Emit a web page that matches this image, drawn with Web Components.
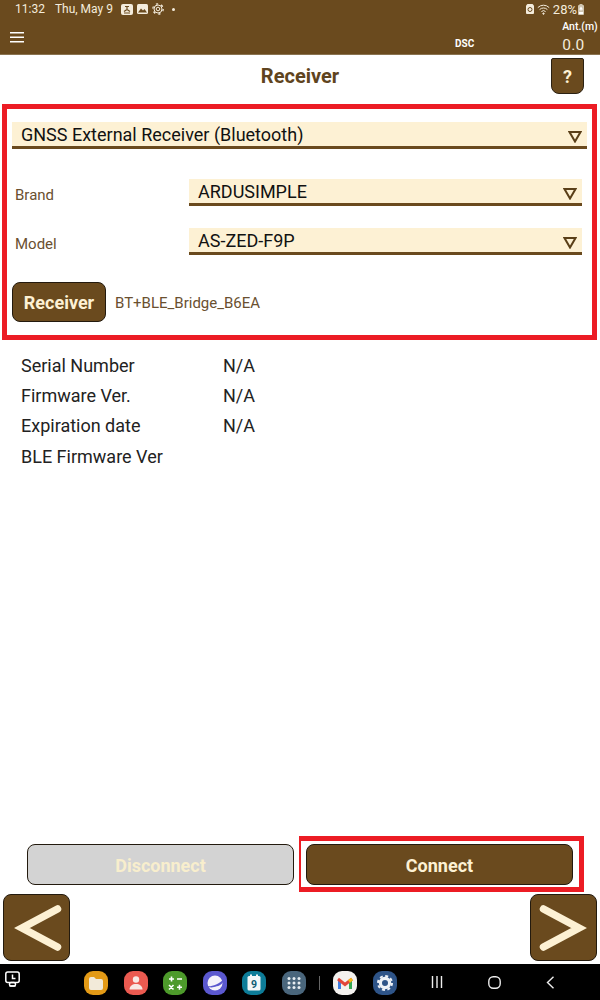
<!DOCTYPE html>
<html>
<head>
<meta charset="utf-8">
<title>Receiver</title>
<style>
  html, body { margin: 0; height: 100%; background: #fff; }
  body { font-family: Roboto, "Liberation Sans", sans-serif; }
  #app { display: flex; flex-direction: column; height: 1000px; width: 600px; overflow: hidden; }
</style>
</head>
<body>
<div id="app">
  <app-header></app-header>
  <title-bar>Receiver</title-bar>
  <annot-box>
    <drop-down wide>GNSS External Receiver (Bluetooth)</drop-down>
    <labeled-row label="Brand" style="margin-top:30px">ARDUSIMPLE</labeled-row>
    <labeled-row label="Model" style="margin-top:22px">AS-ZED-F9P</labeled-row>
    <device-row name="BT+BLE_Bridge_B6EA"></device-row>
  </annot-box>
  <info-list>
    <info-row label="Serial Number" value="N/A"></info-row>
    <info-row label="Firmware Ver." value="N/A"></info-row>
    <info-row label="Expiration date" value="N/A"></info-row>
    <info-row label="BLE Firmware Ver"></info-row>
  </info-list>
  <action-bar></action-bar>
  <nav-bar></nav-bar>
  <system-nav></system-nav>
</div>

<script>
const BROWN = '#6a4a1e';
const CREAM = '#fdf1d4';

class AppHeader extends HTMLElement {
    constructor() {
        super();
        this.attachShadow({ mode: 'open' }).innerHTML = `
            <style>
                :host { display: block; height: 55px; background: ${BROWN}; color: #f4ecdc; flex: none; border-bottom: 1px solid #8a7350; box-sizing: border-box; }
                .status { display: flex; align-items: center; height: 18px; padding: 0 16px 0 15px; font-size: 12px; }
                .date { margin-left: 10px; }
                .icons { display: flex; align-items: center; margin-left: 8px; gap: 4px; }
                .right { margin-left: auto; display: flex; align-items: center; }
                .dot { width: 3px; height: 3px; background: #f4ecdc; border-radius: 50%; margin-left: 8px; }
                .bar { display: flex; align-items: flex-start; height: 36px; padding-left: 10px; }
                .menu { margin-top: 14px; }
                .dsc { margin-left: 431px; margin-top: 20px; font-size: 10px; font-weight: 700; color: #fff; }
                .ant { margin-left: 88px; display: flex; flex-direction: column; }
                .ant b { font-size: 10.5px; font-weight: 500; color: #fff; margin-top: 2px; white-space: nowrap; }
                .ant span { font-size: 15.5px; margin-top: 3px; letter-spacing: .3px; }
            </style>
            <div class="status">
                <span>11:32</span><span class="date">Thu, May 9</span>
                <span class="icons">
                    <svg width="12" height="11" viewBox="0 0 12 11"><rect width="12" height="11" rx="2" fill="#f4ecdc"/><path d="M4 2.5h4M6 2.5v3M3 7.5l3-2 3 2M3 9h6" stroke="${BROWN}" fill="none" stroke-width="1.2"/></svg>
                    <svg width="11" height="10" viewBox="0 0 11 10"><rect width="11" height="10" rx="1.5" fill="#f4ecdc"/><path d="M1 8.5l3-4 2 2 1.5-1.5 2.5 3.500z" fill="${BROWN}"/></svg>
                    <svg width="12" height="12" viewBox="0 0 12 12" fill="none" stroke="#f4ecdc"><circle cx="6" cy="6" r="1.800"/><circle cx="6" cy="6" r="4" stroke-width="1"/><circle cx="6" cy="6" r="5.200" stroke-width="1.300" stroke-dasharray="2.200 3.250"/></svg>
                </span>
                <i class="dot"></i>
                <span class="right">
                    <svg width="8" height="10" viewBox="0 0 8 10"><path d="M1.5 0h5L8 1.5V9a1 1 0 0 1-1 1H1a1 1 0 0 1-1-1V1.5z" fill="#f4ecdc"/><circle cx="4" cy="5.500" r="2" fill="none" stroke="${BROWN}"/></svg>
                    <svg style="margin-left:3px" width="13" height="11" viewBox="0 0 13 11" fill="none" stroke="#f4ecdc" stroke-width="1"><path d="M.8 3.600a8 8 0 0 1 11.400 0M2.600 5.600a5.500 5.500 0 0 1 7.800 0M4.400 7.600a3 3 0 0 1 4.200 0"/><circle cx="6.500" cy="9.600" r=".7" fill="#f4ecdc"/></svg>
                    <span style="margin-left:3px;font-size:13px">28%</span>
                    <svg style="margin-left:1px" width="6" height="11" viewBox="0 0 6 11"><rect x="1.500" width="3" height="1.500" fill="#cfc5b0"/><rect y="1" width="6" height="10" rx="1" fill="#cfc5b0"/><path d="M3 2.500L5 5.500H3.500v1h-1v-1H1zM1 8h4v2H1z" fill="#fff"/></svg>
                </span>
            </div>
            <div class="bar">
                <svg class="menu" width="14" height="11" viewBox="0 0 14 11" fill="#fff"><rect width="14" height="1.500"/><rect y="4.500" width="14" height="1.500"/><rect y="9" width="14" height="1.500"/></svg>
                <span class="dsc">DSC</span>
                <span class="ant"><b>Ant.(m)</b><span>0.0</span></span>
            </div>`;
    }
}

class TitleBar extends HTMLElement {
    constructor() {
        super();
        this.attachShadow({ mode: 'open' }).innerHTML = `
            <style>
                :host { display: grid; grid-template-columns: 1fr auto 1fr; height: 49px; flex: none; }
                h1 { grid-column: 2; margin: 10px 0 0; font-size: 20px; line-height: 23px; font-weight: 700; color: #5f4420; }
                .help { grid-column: 3; justify-self: end; margin: 3px 16px 0 0; width: 33px; height: 36px; box-sizing: border-box;
                    background: ${BROWN}; border: 1.5px solid #2b2113; border-radius: 2px 2px 8px 8px;
                    color: ${CREAM}; font-weight: 700; font-size: 18px; display: grid; place-items: center; }
            </style>
            <h1><slot></slot></h1>
            <div class="help">?</div>`;
    }
}

class AnnotBox extends HTMLElement {
    constructor() {
        super();
        this.attachShadow({ mode: 'open' }).innerHTML = `
            <style>
                :host { display: block; flex: none; box-sizing: border-box; width: 595px; height: 236px; margin-left: 2px;
                    border: 5px solid #ec1c24; padding: 13px 5px 0; }
            </style>
            <slot></slot>`;
    }
}

class DropDown extends HTMLElement {
    constructor() {
        super();
        this.attachShadow({ mode: 'open' }).innerHTML = `
            <style>
                :host { display: flex; align-items: center; height: 27px; box-sizing: border-box; background: ${CREAM};
                    border-bottom: 3px solid ${BROWN}; padding-left: 9px; color: #111; font-size: 18px; }
                svg { margin-left: auto; margin-right: 5px; margin-top: 5px; }
            </style>
            <slot></slot>
            <svg width="14" height="12" viewBox="0 0 14 12"><path d="M1.500 1h11L7 10.500z" fill="none" stroke="#5a3f18" stroke-width="2"/></svg>`;
    }
}

class LabeledRow extends HTMLElement {
    constructor() {
        super();
        this.attachShadow({ mode: 'open' }).innerHTML = `
            <style>
                :host { display: grid; grid-template-columns: 174px 393px; padding-left: 3px; align-items: center; }
                span { font-size: 15px; color: #6a5030; padding-top: 5px; }
            </style>
            <span>${this.getAttribute('label')}</span>
            <drop-down><slot></slot></drop-down>`;
    }
}

class AppButton extends HTMLElement {
    constructor() {
        super();
        this.attachShadow({ mode: 'open' }).innerHTML = `
            <style>
                :host { display: grid; place-items: center; box-sizing: border-box; background: ${BROWN}; color: ${CREAM};
                    border: 1.5px solid #231a0e; border-radius: 8px; font-weight: 700; font-size: 18px; padding-top: 1px; }
                :host([disabled]) { background: #d3d3d3; color: #f8eecd; }
            </style>
            <slot></slot>`;
    }
}

class DeviceRow extends HTMLElement {
    constructor() {
        super();
        this.attachShadow({ mode: 'open' }).innerHTML = `
            <style>
                :host { display: flex; align-items: center; margin-top: 27px; }
                app-button { width: 94px; height: 40px; }
                span { margin-left: 9px; font-size: 15px; color: #6a5030; padding-top: 2px; }
            </style>
            <app-button>Receiver</app-button>
            <span>${this.getAttribute('name')}</span>`;
    }
}

class InfoList extends HTMLElement {
    constructor() {
        super();
        this.attachShadow({ mode: 'open' }).innerHTML = `
            <style>
                :host { display: block; flex: 1; padding: 10px 0 0 21px; }
            </style>
            <slot></slot>`;
    }
}

class InfoRow extends HTMLElement {
    constructor() {
        super();
        this.attachShadow({ mode: 'open' }).innerHTML = `
            <style>
                :host { display: grid; grid-template-columns: 202px 1fr; height: 30.4px; align-items: center; font-size: 18px; color: #222; }
            </style>
            <span>${this.getAttribute('label')}</span>
            <span>${this.getAttribute('value') || ''}</span>`;
    }
}

class ActionBar extends HTMLElement {
    constructor() {
        super();
        this.attachShadow({ mode: 'open' }).innerHTML = `
            <style>
                :host { display: flex; align-items: flex-start; flex: none; padding-left: 27px; height: 56px; }
                app-button { width: 267px; height: 41px; }
                app-button[disabled] { margin: 8px 5px 0 0; }
                .mark { box-sizing: border-box; width: 285px; height: 56px; border: 5px solid #ec1c24; border-left-width: 2px; padding: 3px 5px 0; }
            </style>
            <app-button disabled>Disconnect</app-button>
            <div class="mark"><app-button>Connect</app-button></div>`;
    }
}

class NavBar extends HTMLElement {
    constructor() {
        super();
        this.attachShadow({ mode: 'open' }).innerHTML = `
            <style>
                :host { display: flex; justify-content: space-between; flex: none; padding: 2px 3px 3px; }
                app-button { width: 67px; height: 67px; padding-top: 0; }
                svg { display: block; }
            </style>
            <app-button><svg width="52" height="48" viewBox="0 0 52 48"><path d="M46.500 5L11 24l35.500 19" fill="none" stroke="${CREAM}" stroke-width="7.500" stroke-linecap="round" stroke-linejoin="miter"/></svg></app-button>
            <app-button><svg width="52" height="48" viewBox="0 0 52 48"><path d="M5.500 5L41 24 5.500 43" fill="none" stroke="${CREAM}" stroke-width="7.500" stroke-linecap="round" stroke-linejoin="miter"/></svg></app-button>`;
    }
}

class SystemNav extends HTMLElement {
    constructor() {
        super();
        this.attachShadow({ mode: 'open' }).innerHTML = `
            <style>
                :host { display: flex; align-items: flex-start; flex: none; height: 36px; background: #000; box-sizing: border-box; padding: 7px 0 0 5px; }
                svg { display: block; flex: none; }
                .apps { display: flex; gap: 15.5px; margin-left: 64px; }
                .sep { width: 1px; height: 14px; background: #666; margin: 5px 0 0 13px; }
                .apps2 { display: flex; gap: 16px; margin-left: 13px; }
                text { font-family: Roboto, "Liberation Sans", sans-serif; }
            </style>
            <svg width="15" height="17" viewBox="0 0 15 17" fill="none" stroke="#fff" stroke-width="1.500"><rect x=".8" y="1" width="13.400" height="10.500" rx="2"/><path d="M7.500 3.500v4h3M4.500 15h6" /><rect x="4.500" y="11.500" width="6" height="3.500" rx="1.500"/></svg>
            <div class="apps">
                <svg width="24" height="24" viewBox="0 0 24 24"><rect width="24" height="24" rx="9" fill="#e39a16"/><path d="M5 8a2 2 0 0 1 2-2h3l2 2h5a2 2 0 0 1 2 2v7a2 2 0 0 1-2 2H7a2 2 0 0 1-2-2z" fill="#f2ead9"/></svg>
                <svg width="24" height="24" viewBox="0 0 24 24"><rect width="24" height="24" rx="9" fill="#eb5a50"/><circle cx="12" cy="8.500" r="3.200" fill="#f8e9e4"/><path d="M5.500 18.500c0-3.500 3-5.500 6.500-5.500s6.500 2 6.500 5.500z" fill="#f8e9e4"/></svg>
                <svg width="24" height="24" viewBox="0 0 24 24"><rect width="24" height="24" rx="9" fill="#4d9a2b"/><path d="M6 8h5M8.500 5.500v5M14 8h5M6 14l4.500 4.500M10.500 14L6 18.500M14 16.300h5M16.500 13.800v5" stroke="#fff" stroke-width="1.600" fill="none"/></svg>
                <svg width="24" height="24" viewBox="0 0 24 24"><rect width="24" height="24" rx="9" fill="#5b58cf"/><circle cx="12" cy="12" r="7.500" fill="#f4f2fb"/><path d="M3 15c5 1 12-1 18-7-1 7-7 7-10 8s-6 0-8-1z" fill="#5b58cf"/></svg>
                <svg width="24" height="24" viewBox="0 0 24 24"><rect width="24" height="24" rx="9" fill="#0d7c98"/><rect x="5.500" y="5" width="13" height="14.500" rx="1.500" fill="#f3f7f8"/><rect x="8" y="3.500" width="2" height="3" fill="#f3f7f8"/><rect x="14" y="3.500" width="2" height="3" fill="#f3f7f8"/><text x="12" y="17" font-size="10.500" font-weight="700" fill="#0d5d75" text-anchor="middle">9</text></svg>
                <svg width="24" height="24" viewBox="0 0 24 24"><rect width="24" height="24" rx="9" fill="#4a667c"/><g fill="#e7edf1"><circle cx="7" cy="7.500" r="1.500"/><circle cx="12" cy="7.500" r="1.500"/><circle cx="17" cy="7.500" r="1.500"/><circle cx="7" cy="12" r="1.500"/><circle cx="12" cy="12" r="1.500"/><circle cx="17" cy="12" r="1.500"/><circle cx="7" cy="16.500" r="1.500"/><circle cx="12" cy="16.500" r="1.500"/><circle cx="17" cy="16.500" r="1.500"/></g></svg>
            </div>
            <i class="sep"></i>
            <div class="apps2">
                <svg width="24" height="24" viewBox="0 0 24 24"><rect width="24" height="24" rx="9" fill="#f3f1ee"/><path d="M5 8v10h3v-7z" fill="#3f7de0"/><path d="M19 8v10h-3v-7z" fill="#35a853"/><path d="M5 8l7 5.500L19 8" fill="none" stroke="#e2453a" stroke-width="3"/><path d="M16 10.500L19 8" stroke="#f5bb12" stroke-width="3"/></svg>
                <svg width="24" height="24" viewBox="0 0 24 24"><rect width="24" height="24" rx="9" fill="#2e5488"/><circle cx="12" cy="12" r="4.600" fill="none" stroke="#eef2f7" stroke-width="3.200"/><circle cx="12" cy="12" r="7" fill="none" stroke="#eef2f7" stroke-width="2" stroke-dasharray="3 2.500"/></svg>
            </div>
            <svg style="margin:5px 0 0 34px" width="12" height="12" viewBox="0 0 12 12" stroke="#eee" stroke-width="1.400"><path d="M1.500 0v12M6 0v12M10.500 0v12"/></svg>
            <svg style="margin:5px 0 0 45px" width="13" height="13" viewBox="0 0 13 13" fill="none" stroke="#eee" stroke-width="1.400"><rect x=".8" y=".8" width="11.400" height="11.400" rx="4.500"/></svg>
            <svg style="margin:5px 0 0 45px" width="9" height="13" viewBox="0 0 9 13" fill="none" stroke="#eee" stroke-width="1.400"><path d="M7.500 .8L1.500 6.500l6 5.700"/></svg>`;
    }
}

// children first, so nested tags are upgraded by the time the parents render
customElements.define('drop-down', DropDown);
customElements.define('app-button', AppButton);
customElements.define('app-header', AppHeader);
customElements.define('title-bar', TitleBar);
customElements.define('annot-box', AnnotBox);
customElements.define('labeled-row', LabeledRow);
customElements.define('device-row', DeviceRow);
customElements.define('info-list', InfoList);
customElements.define('info-row', InfoRow);
customElements.define('action-bar', ActionBar);
customElements.define('nav-bar', NavBar);
customElements.define('system-nav', SystemNav);
</script>
</body>
</html>
